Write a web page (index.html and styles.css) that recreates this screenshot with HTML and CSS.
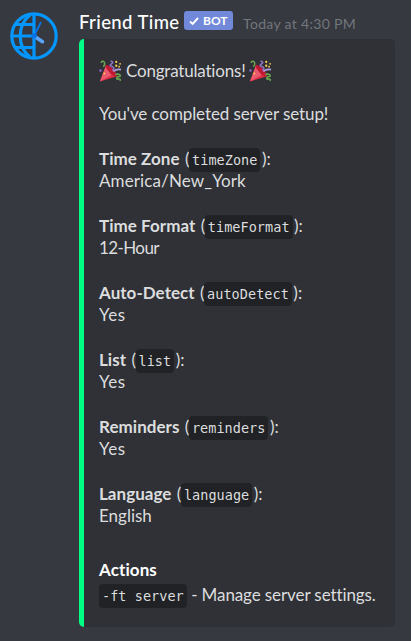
FILE: index.html
```html
<!DOCTYPE html>
<html lang="en">
<head>
<meta charset="utf-8">
<title>Friend Time</title>
<link rel="stylesheet" href="styles.css">
</head>
<body>
<svg class="defs" aria-hidden="true">
  <symbol id="popper" viewBox="0 0 24 24">
    <path d="M7.5 5 L19 17 L1 22.5 Z" fill="#dd2e44"/>
    <path d="M7.5 5 L13 16 L1 22.5 Z" fill="#ea596e"/>
    <path d="M7 5.5 C10 4 20 13 18.5 17.5 C15 18 6 9 7 5.5Z" fill="#be1931"/>
    <path d="M2 3 C4-1 8 3 4.5 7" fill="none" stroke="#6aa84f" stroke-width="1.5"/>
    <path d="M12 1 q4 1 1 3 q-3 2 1 3 q3 1 0 4" fill="none" stroke="#9176c9" stroke-width="1.7"/>
    <path d="M15 12 q3-3 8-2" fill="none" stroke="#b29ae0" stroke-width="1.8"/>
    <path d="M17 15 q6-1 5 2 q-5 1-3 3 q4-1 3 2" fill="none" stroke="#6aa84f" stroke-width="1.6"/>
    <g fill="#ffcc4d"><circle cx="18" cy="2" r="1.1"/><circle cx="22" cy="4" r=".9"/><circle cx="18" cy="6" r="1.2"/><circle cx="21" cy="7" r=".9"/><circle cx="5.5" cy="14" r="1"/></g>
    <circle cx="1.5" cy="11" r="1.3" fill="#9266cc"/>
  </symbol>
</svg>
<main class="message">
  <svg class="avatar" viewBox="0 0 50 50">
    <g fill="none" stroke="#0496ff" stroke-width="3.2">
      <circle cx="25" cy="26" r="22.2"/>
      <path d="M25 4V48M3 26H25M7 14.5H25M7 37.5H25M21 5C8 15 8 37 21 47"/>
    </g>
    <path d="M25 26L32 12" stroke="#0873e6" stroke-width="1.8"/>
    <path d="M25 26L33.5 31.7" stroke="#5ba5ff" stroke-width="3.6" stroke-linecap="round"/>
    <circle cx="25" cy="26" r="2.8" fill="#0873e6"/>
  </svg>
  <section class="content">
    <header class="header">
      <span class="name">Friend Time</span>
      <span class="badge"><svg class="check" viewBox="0 0 10 10"><path d="M1 5.5L3.7 8L9 2" fill="none" stroke="#fff" stroke-width="1.9"/></svg>BOT</span>
      <time class="time">Today at 4:30 PM</time>
    </header>
    <article class="embed">
      <p class="row congrats"><svg class="emoji"><use href="#popper"/></svg><span>Congratulations!</span><svg class="emoji"><use href="#popper"/></svg></p>
      <p class="row intro">You've completed server setup!</p>
      <p class="row"><b>Time Zone</b> (<code>timeZone</code>):<br><span class="zone">America/New_York</span></p>
      <p class="row"><b>Time Format</b> (<code>timeFormat</code>):<br><span class="format">12-Hour</span></p>
      <p class="row"><b>Auto-Detect</b> (<code>autoDetect</code>):<br><span class="yes">Yes</span></p>
      <p class="row"><b>List</b> (<code>list</code>):<br><span class="yes">Yes</span></p>
      <p class="row"><b>Reminders</b> (<code>reminders</code>):<br><span class="yes">Yes</span></p>
      <p class="row"><b>Language</b> (<code>language</code>):<br>English</p>
      <h2 class="title">Actions</h2>
      <p class="action"><code>-ft server</code> <span>- Manage server settings.</span></p>
    </article>
  </section>
</main>
</body>
</html>
```
FILE: styles.css
```css
* { box-sizing: border-box; }
body { margin: 0; height: 641px; overflow: hidden; background: #36393f; color: #dcddde; font-family: Lato, sans-serif; font-size: 17px; }
.defs { position: absolute; width: 0; height: 0; }
.message { display: flex; padding: 10px 16px 0 9px; }
.avatar { width: 50px; height: 50px; flex: none; margin-right: 20px; }
.content { flex: 1; min-width: 0; }
.header { display: flex; height: 29px; align-items: flex-start; white-space: nowrap; }
.name { color: #fff; font-size: 18.5px; font-weight: 500; line-height: 24px; letter-spacing: .4px; width: 105px; }
.badge { display: flex; align-items: center; width: 49px; height: 19px; margin-top: 1px; padding-left: 5px; gap: 4px; border-radius: 3px; background: #7289da; color: #fff; font-size: 12px; font-weight: 700; }
.check { width: 10px; height: 10px; }
.time { margin-left: 10px; color: #72767d; font-size: 14px; line-height: 27px; letter-spacing: .33px; }
.embed { height: 588px; padding: 21px 0 0 15px; border-left: 5px solid #00ff85; border-radius: 5px; background: #2f3136; white-space: nowrap; }
.row { margin: 0 0 22.33px; line-height: 22.33px; }
.congrats { display: flex; height: 22.33px; align-items: center; margin-bottom: 20.6px; }
.congrats span { width: 123px; margin-left: 4px; letter-spacing: -.2px; }
.emoji { width: 23px; height: 23px; flex: none; }
.intro { letter-spacing: -.1px; }
.zone { letter-spacing: .12px; }
.format { letter-spacing: -.6px; }
.yes { letter-spacing: .5px; }
b { font-weight: 700; letter-spacing: .04px; margin-right: 1px; }
code { padding: 4px 3px; margin-left: -.5px; border-radius: 4px; background: #202225; font-family: "DejaVu Sans Mono", monospace; font-size: 13.5px; line-height: 14px; letter-spacing: .05px; }
.row code { margin-right: 1.5px; }
.title { margin: 31px 0 0; color: #fff; font-size: 17px; line-height: 24px; letter-spacing: .1px; }
.action { margin: 2px 0 0; line-height: 22px; }
.action code { margin-left: 0; }
.action span { letter-spacing: -.1px; }
```
